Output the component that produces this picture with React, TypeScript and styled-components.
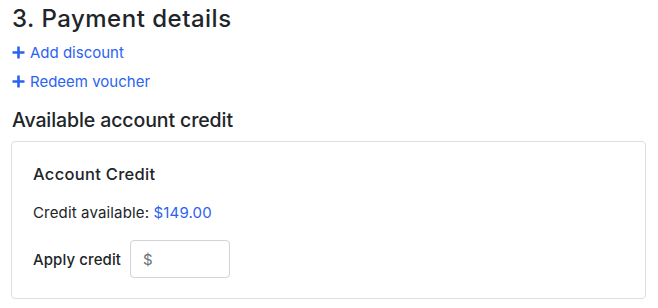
import React from "react";
import styled, { createGlobalStyle } from "styled-components";

const Global = createGlobalStyle`
  * { box-sizing: border-box; }
  body {
    margin: 0;
    background: #ffffff;
    font-family: Inter, "Noto Sans", Arial, sans-serif;
    color: #212529;
  }
`;

const Page = styled.div`
  padding: 5px 12px 10px 11px;
  width: 658px;
`;

const Title = styled.h2`
  margin: 0 0 0 1px;
  font-size: 24px;
  font-weight: 500;
  line-height: 28px;
  letter-spacing: 0.5px;
`;

const Links = styled.div`
  display: flex;
  flex-direction: column;
  gap: 6px;
  margin-top: 8px;
  margin-left: 1px;
`;

const ActionLink = styled.a`
  display: inline-flex;
  align-items: center;
  gap: 5px;
  color: #2b63f0;
  font-size: 15px;
  line-height: 23px;
  text-decoration: none;
  cursor: pointer;
`;

const SubTitle = styled.h3`
  margin: 15px 0 0 1px;
  font-size: 19.5px;
  font-weight: 500;
  line-height: 24px;
  letter-spacing: -0.1px;
`;

const Card = styled.section`
  margin-top: 9px;
  border: 1px solid #dcdee1;
  border-radius: 4px;
  padding: 20px 21px 20px 21px;
  height: 158px;
`;

const CardTitle = styled.h4`
  margin: 0;
  font-size: 16.5px;
  font-weight: 500;
  line-height: 24px;
  letter-spacing: 0.3px;
`;

const Line = styled.p`
  margin: 16px 0 0 0;
  font-size: 15px;
  line-height: 22px;
  letter-spacing: 0.15px;
`;

const Amount = styled.span`
  color: #2b63f0;
`;

const ApplyRow = styled.label`
  display: flex;
  align-items: center;
  gap: 9px;
  margin-top: 16px;
  font-size: 15px;
  font-weight: 500;
  letter-spacing: 0.1px;
`;

const InputBox = styled.div`
  display: flex;
  align-items: center;
  width: 100px;
  height: 38px;
  border: 1px solid #cfd4da;
  border-radius: 4px;
  padding: 0 12px;
  color: #6b7178;
  font-size: 15px;
  font-weight: 400;
`;

const Input = styled.input`
  border: none;
  outline: none;
  width: 50px;
  margin-left: 4px;
  font: inherit;
  background: transparent;
`;

const Plus = () => (
  <svg width="13" height="13" viewBox="0 0 13 13" aria-hidden="true">
    <path d="M6.5 0.5v12M0.5 6.5h12" stroke="currentColor" strokeWidth="2.6" />
  </svg>
);

export default function App() {
  return (
    <>
      <Global />
      <Page>
        <Title>3. Payment details</Title>
        <Links>
          <ActionLink>
            <Plus />
            Add discount
          </ActionLink>
          <ActionLink>
            <Plus />
            Redeem voucher
          </ActionLink>
        </Links>
        <SubTitle>Available account credit</SubTitle>
        <Card>
          <CardTitle>Account Credit</CardTitle>
          <Line>
            Credit available: <Amount>$149.00</Amount>
          </Line>
          <ApplyRow>
            Apply credit
            <InputBox>
              $
              <Input type="text" />
            </InputBox>
          </ApplyRow>
        </Card>
      </Page>
    </>
  );
}
